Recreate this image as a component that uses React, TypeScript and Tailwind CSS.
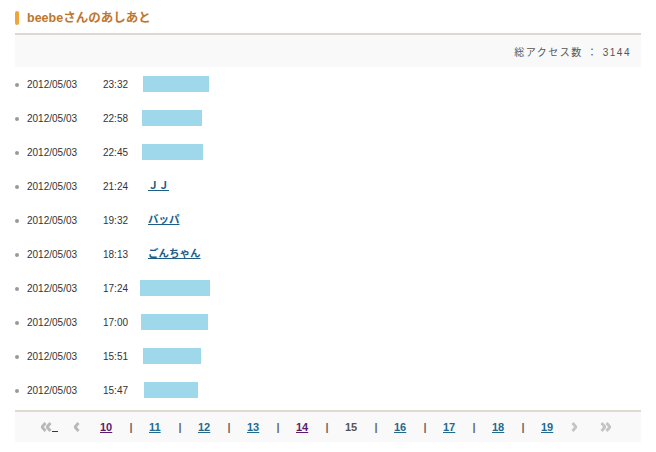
const rows = [
  { time: '23:32', bar: 'ml-[3px] w-[66px]' },
  { time: '22:58', bar: 'ml-[2px] w-[60px]' },
  { time: '22:45', bar: 'ml-[2px] w-[61px]' },
  { time: '21:24', name: 'ＪＪ' },
  { time: '19:32', name: 'バッパ' },
  { time: '18:13', name: 'ごんちゃん' },
  { time: '17:24', bar: 'ml-0 w-[70px]' },
  { time: '17:00', bar: 'ml-[1px] w-[67px]' },
  { time: '15:51', bar: 'ml-[3px] w-[58px]' },
  { time: '15:47', bar: 'ml-[4px] w-[54px]' },
]

const pages = [
  { n: 10, visited: true },
  { n: 11 },
  { n: 12 },
  { n: 13 },
  { n: 14, visited: true },
  { n: 15, current: true },
  { n: 16 },
  { n: 17 },
  { n: 18 },
  { n: 19 },
]

function Chevron({ double, flip, color }: { double?: boolean; flip?: boolean; color: string }) {
  return (
    <svg
      width={double ? 12 : 7}
      height="10"
      viewBox={double ? '0 0 12 10' : '0 0 7 10'}
      className={flip ? 'scale-x-[-1]' : ''}
      fill="none"
      stroke={color}
      strokeWidth="2.8"
      strokeLinejoin="bevel"
    >
      <polyline points="5.5,1 2,5 5.5,9" />
      {double && <polyline points="10.5,1 7,5 10.5,9" />}
    </svg>
  )
}

export default function App() {
  return (
    <div
      className="w-[656px] h-[452px] bg-white px-[15px] text-[10px] text-[#333]"
      style={{ fontFamily: '"Liberation Sans", "Noto Sans CJK JP", sans-serif' }}
    >
      {/* Header */}
      <div className="h-[33px] flex items-start pt-[11px]">
        <span className="w-[4px] h-[14px] rounded-full bg-[#f0a53a]" />
        <h2 className="ml-[8px] -mt-[1px] text-[12.5px] leading-[16px] font-bold text-[#c0772c]">
          beebeさんのあしあと
        </h2>
      </div>
      <div className="border-t-2 border-[#dcd8cf]" />
      <div className="h-[32px] bg-[#f9f9f9] flex items-center justify-end pr-[10px] pt-[3px] tracking-[1.5px] text-[#555]">
        総アクセス数 ： 3144
      </div>

      {/* List */}
      <ul className="pb-[3px]">
        {rows.map((r, i) => (
          <li key={i} className="h-[34px] flex items-center">
            <span className="w-[4px] h-[4px] rounded-full bg-[#9a9a9a] mt-[1px]" />
            <span className="ml-[8px] w-[76px] mt-[1px]">2012/05/03</span>
            <span className="w-[37px] mt-[1px]">{r.time}</span>
            {r.bar ? (
              <span className={`h-[16px] bg-[#9ed8ea] ${r.bar}`} />
            ) : (
              <a className="ml-[8px] text-[10.5px] font-bold underline text-[#1d5d86] cursor-pointer">
                {r.name}
              </a>
            )}
          </li>
        ))}
      </ul>

      {/* Pagination */}
      <div className="border-t-2 border-[#e2d9cf]" />
      <div className="h-[30px] bg-[#f9f9f9] flex items-center pl-[25px] text-[11px] font-bold">
        <Chevron double color="#b8b8b8" />
        <span className="w-[6px] h-[1px] bg-[#5e1a6e] mt-[9px]" />
        <span className="ml-[15px] flex">
          <Chevron color="#b8b8b8" />
        </span>
        <div className="ml-[20px] flex items-center">
          {pages.map((p, i) => (
            <div key={p.n} className="flex items-center">
              {i > 0 && <span className="w-[36px] text-center text-[#666]">|</span>}
              {p.current ? (
                <span className="w-[13px] text-[#555]">{p.n}</span>
              ) : (
                <a
                  className={`w-[13px] underline cursor-pointer ${
                    p.visited ? 'text-[#5e1a6e]' : 'text-[#1f6a8e]'
                  }`}
                >
                  {p.n}
                </a>
              )}
            </div>
          ))}
        </div>
        <span className="ml-[17px] flex">
          <Chevron flip color="#c4c4c4" />
        </span>
        <span className="ml-[22px] flex">
          <Chevron double flip color="#c4c4c4" />
        </span>
      </div>
    </div>
  )
}
